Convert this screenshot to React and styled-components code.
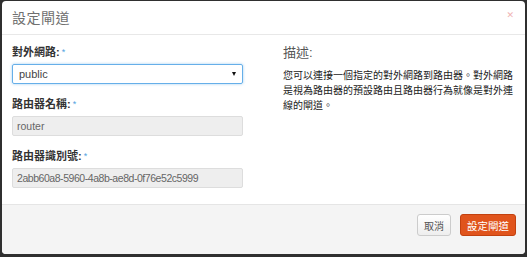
import styled, { createGlobalStyle } from "styled-components";

const GlobalStyle = createGlobalStyle`
  html, body {
    margin: 0;
    padding: 0;
    background: #2f2f2f;
  }
  body {
    font-family: "Liberation Sans", "Noto Sans CJK TC", sans-serif;
  }
`;

const CJK = `"Liberation Sans", "Noto Sans CJK TC", sans-serif`;

const Backdrop = styled.div`
  width: 527px;
  height: 257px;
  box-sizing: border-box;
  padding: 1px 2px 3px 2px;
  display: flex;
`;

const Modal = styled.div`
  flex: 1;
  display: flex;
  flex-direction: column;
  background: #fff;
  border-radius: 4px;
  overflow: hidden;
`;

const Header = styled.div`
  height: 33px;
  border-bottom: 1px solid #e8e8e8;
  display: flex;
  align-items: center;
  justify-content: space-between;
  padding: 0 11px 0 10px;
`;

const Title = styled.h4`
  margin: 0;
  font-family: ${CJK};
  font-size: 14px;
  font-weight: 400;
  color: #707070;
  letter-spacing: 0.5px;
  line-height: 18px;
`;

const Close = styled.span`
  font-size: 9px;
  line-height: 9px;
  color: #f0b4b4;
  margin-top: -4px;
  font-family: "DejaVu Sans", sans-serif;
`;

const Body = styled.div`
  flex: 1;
  display: flex;
  gap: 40px;
  padding: 10px 10px 0 10px;
`;

const Column = styled.div`
  width: ${(p) => p.$width}px;
  display: flex;
  flex-direction: column;
`;

const Field = styled.div`
  display: flex;
  flex-direction: column;
  margin-bottom: 13px;
`;

const Label = styled.label`
  font-family: ${CJK};
  font-size: 11px;
  font-weight: 700;
  line-height: 14px;
  color: #333;
  margin-bottom: 5px;
`;

const Required = styled.span`
  color: #4fa3e0;
  font-weight: 400;
  font-size: 9px;
  vertical-align: top;
  margin-left: 2px;
`;

const SelectBox = styled.div`
  height: 20px;
  box-sizing: border-box;
  border: 1px solid #66afe9;
  border-radius: 2px;
  box-shadow: 0 0 3px rgba(102, 175, 233, 0.6);
  display: flex;
  align-items: center;
  justify-content: space-between;
  padding: 0 6px 0 6px;
  font-size: 11px;
  color: #444;
`;

const Arrow = styled.span`
  width: 0;
  height: 0;
  border-left: 2.5px solid transparent;
  border-right: 2.5px solid transparent;
  border-top: 4px solid #111;
`;

const Input = styled.div`
  height: 20px;
  box-sizing: border-box;
  background: #eee;
  border: 1px solid #ddd;
  border-radius: 2px;
  display: flex;
  align-items: center;
  padding: 0 4px;
  font-size: 10.5px;
  letter-spacing: ${(p) => (p.$tight ? -0.45 : 0)}px;
  color: #666;
`;

const DescTitle = styled.h3`
  margin: 0 0 8px 0;
  font-family: ${CJK};
  font-size: 13px;
  font-weight: 400;
  line-height: 15px;
  color: #555;
`;

const DescText = styled.p`
  margin: 0;
  font-family: ${CJK};
  font-size: 10px;
  line-height: 15px;
  color: #222;
`;

const Footer = styled.div`
  height: 40px;
  border-top: 1px solid #e5e5e5;
  background: #f4f4f4;
  display: flex;
  justify-content: flex-end;
  align-items: flex-start;
  gap: 9px;
  padding: 9px 9px 0 0;
  box-sizing: content-box;
`;

const Button = styled.button`
  height: 22px;
  box-sizing: border-box;
  padding: 0 ${(p) => (p.$primary ? 6 : 6)}px;
  border-radius: 3px;
  font-family: ${CJK};
  font-size: ${(p) => (p.$primary ? 10.5 : 10)}px;
  border: 1px solid ${(p) => (p.$primary ? "#c2410f" : "#ccc")};
  background: ${(p) =>
    p.$primary ? "#e0541c" : "linear-gradient(#fff, #eee)"};
  color: ${(p) => (p.$primary ? "#fff" : "#555")};
  cursor: pointer;
`;

export default function App() {
  return (
    <>
      <GlobalStyle />
      <Backdrop>
        <Modal>
          <Header>
            <Title>設定閘道</Title>
            <Close>✕</Close>
          </Header>
          <Body>
            <Column $width={231}>
              <Field>
                <Label>
                  對外網路:<Required>*</Required>
                </Label>
                <SelectBox>
                  <span>public</span>
                  <Arrow />
                </SelectBox>
              </Field>
              <Field>
                <Label>
                  路由器名稱:<Required>*</Required>
                </Label>
                <Input>router</Input>
              </Field>
              <Field>
                <Label>
                  路由器識別號:<Required>*</Required>
                </Label>
                <Input $tight>2abb60a8-5960-4a8b-ae8d-0f76e52c5999</Input>
              </Field>
            </Column>
            <Column $width={232}>
              <DescTitle>描述:</DescTitle>
              <DescText>
                您可以連接一個指定的對外網路到路由器。對外網路是視為路由器的預設路由且路由器行為就像是對外連線的閘道。
              </DescText>
            </Column>
          </Body>
          <Footer>
            <Button>取消</Button>
            <Button $primary>設定閘道</Button>
          </Footer>
        </Modal>
      </Backdrop>
    </>
  );
}
